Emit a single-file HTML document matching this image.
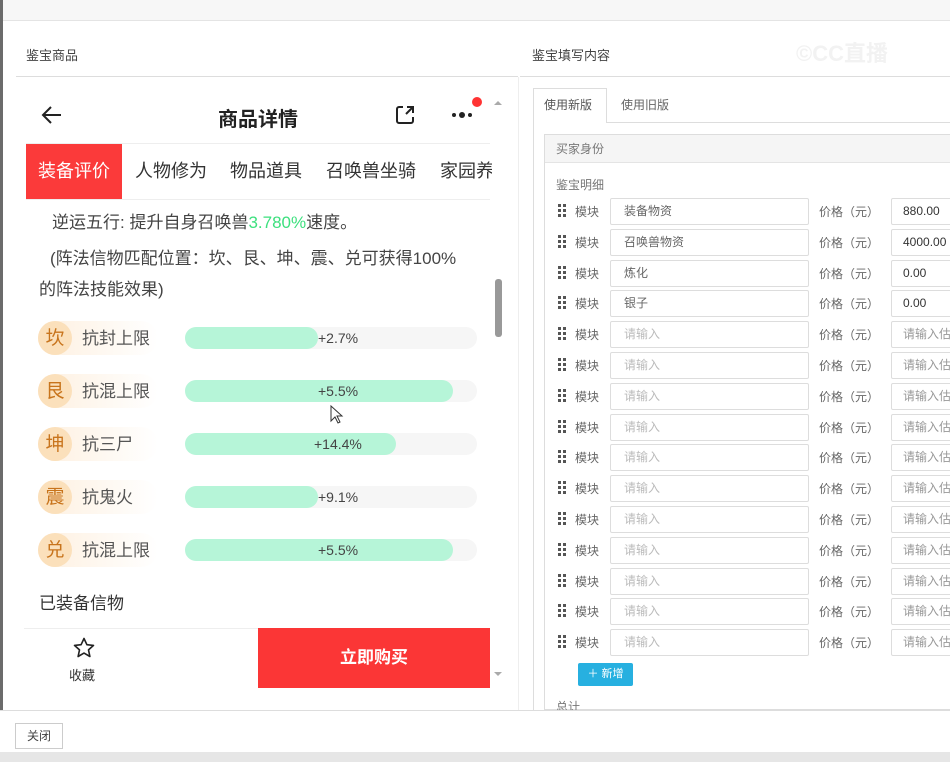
<!DOCTYPE html>
<html><head><meta charset="utf-8"><style>
*{margin:0;padding:0;box-sizing:border-box}
body{width:950px;height:762px;overflow:hidden;background:#fff;font-family:"Liberation Sans","Noto Sans CJK SC",sans-serif;position:relative;color:#333}
.a{position:absolute}
.t{white-space:nowrap}
.c{display:flex;align-items:center;justify-content:center}
</style></head><body>
<div class="a" style="left:0;top:0;width:950px;height:21px;background:#f7f7f7;border-bottom:1px solid #e4e4e4"></div>
<div class="a" style="left:0;top:0;width:3px;height:752px;background:#6b6b6b"></div>
<div class="a t" style="left:26px;top:45px;font-size:13px;color:#444">鉴宝商品</div>
<div class="a" style="left:16px;top:76px;width:502px;height:1px;background:#ddd"></div>
<div class="a t" style="left:532px;top:45px;font-size:13px;color:#444">鉴宝填写内容</div>
<div class="a t" style="left:796px;top:36px;font-size:22px;color:#f2f2f2;font-weight:bold">©CC直播</div>
<div class="a" style="left:520px;top:76px;width:430px;height:1px;background:#ddd"></div>
<div class="a" style="left:518px;top:77px;width:1px;height:633px;background:#eee"></div>

<!-- phone -->
<div class="a" style="left:40px;top:103px;width:24px;height:24px">
<svg width="24" height="24" viewBox="0 0 24 24"><path d="M21 12H3M11 4L3 12l8 8" fill="none" stroke="#222" stroke-width="2"/></svg></div>
<div class="a t" style="left:218px;top:103px;font-size:20px;font-weight:bold;color:#222">商品详情</div>
<div class="a" style="left:394px;top:104px"><svg width="22" height="22" viewBox="0 0 22 22"><path d="M9 3H5a2 2 0 0 0-2 2v12a2 2 0 0 0 2 2h12a2 2 0 0 0 2-2v-4M12 10l7-7M13 3h6v6" fill="none" stroke="#222" stroke-width="2"/></svg></div>
<div class="a" style="left:452px;top:113px;width:4px;height:4px;border-radius:2px;background:#222"></div>
<div class="a" style="left:459px;top:112px;width:6px;height:6px;border-radius:3px;background:#222"></div>
<div class="a" style="left:468px;top:113px;width:4px;height:4px;border-radius:2px;background:#222"></div>
<div class="a" style="left:472px;top:97px;width:10px;height:10px;border-radius:5px;background:#f33"></div>
<div class="a" style="left:494px;top:97px;width:0;height:0;border:4px solid transparent;border-bottom-color:#aaa"></div>
<div class="a" style="left:26px;top:143px;width:464px;height:1px;background:#eee"></div>
<div class="a t" style="left:26px;top:144px;width:96px;height:55px;background:#fb3a3a;color:#fff;font-size:18px;line-height:55px;text-align:center">装备评价</div>
<div class="a t" style="left:135px;top:144px;font-size:18px;line-height:55px;color:#333">人物修为</div>
<div class="a t" style="left:230px;top:144px;font-size:18px;line-height:55px;color:#333">物品道具</div>
<div class="a t" style="left:326px;top:144px;font-size:18px;line-height:55px;color:#333">召唤兽坐骑</div>
<div class="a t" style="left:440px;top:144px;width:52px;overflow:hidden;font-size:18px;line-height:55px;color:#333">家园养</div>
<div class="a" style="left:26px;top:199px;width:464px;height:1px;background:#eee"></div>
<div class="a t" style="left:52px;top:208px;font-size:17px;color:#444">逆运五行: 提升自身召唤兽<span style="color:#3de07e">3.780%</span>速度。</div>
<div class="a t" style="left:50px;top:244px;font-size:17px;color:#444">(阵法信物匹配位置：坎、艮、坤、震、兑可获得100%</div>
<div class="a t" style="left:39px;top:275px;font-size:17px;color:#444">的阵法技能效果)</div>
<div class="a" style="left:495px;top:279px;width:7px;height:58px;border-radius:3px;background:#999"></div>

<div id="bars"></div>

<div class="a t" style="left:39px;top:589px;font-size:17px;color:#333">已装备信物</div>
<div class="a" style="left:24px;top:628px;width:234px;height:1px;background:#eee"></div>
<div class="a" style="left:72px;top:636px"><svg width="24" height="24" viewBox="0 0 24 24"><path d="M12 2.5l2.9 6.2 6.6.7-5 4.5 1.4 6.6L12 17.1l-5.9 3.4 1.4-6.6-5-4.5 6.6-.7z" fill="none" stroke="#222" stroke-width="1.6" stroke-linejoin="round"/></svg></div>
<div class="a t" style="left:69px;top:665px;font-size:13px;color:#333">收藏</div>
<div class="a t" style="left:258px;top:628px;width:232px;height:60px;background:#fb3636;color:#fff;font-size:17px;font-weight:bold;line-height:60px;text-align:center">立即购买</div>
<div class="a" style="left:494px;top:672px;border:4px solid transparent;border-top-color:#aaa"></div>

<!-- right -->
<div class="a" style="left:533px;top:122px;width:417px;height:1px;background:#ddd"></div>
<div class="a" style="left:533px;top:88px;width:74px;height:35px;background:#fff;border:1px solid #ddd;border-bottom:none"></div>
<div class="a t" style="left:544px;top:96px;font-size:12px;color:#555">使用新版</div>
<div class="a t" style="left:621px;top:96px;font-size:12px;color:#666">使用旧版</div>
<div class="a" style="left:533px;top:123px;width:1px;height:587px;background:#ddd"></div>
<div class="a" style="left:544px;top:134px;width:406px;height:576px;border:1px solid #ddd;border-right:none"></div>
<div class="a" style="left:545px;top:135px;width:405px;height:28px;background:#f5f5f5;border-bottom:1px solid #e4e4e4"></div>
<div class="a t" style="left:556px;top:140px;font-size:12px;color:#777">买家身份</div>
<div class="a t" style="left:556px;top:176px;font-size:12px;color:#777">鉴宝明细</div>
<div id="rows"></div>
<div class="a t" style="left:578px;top:663px;width:55px;height:23px;background:#27b0e0;border-radius:2px;color:#fff;font-size:11px;line-height:23px;text-align:center">＋ 新增</div>
<div class="a t" style="left:556px;top:698px;font-size:12px;color:#777">总计</div>

<div class="a" style="left:0;top:710px;width:950px;height:42px;background:#fff;border-top:1px solid #ddd"></div>
<div class="a t" style="left:15px;top:723px;width:48px;height:26px;border:1px solid #ccc;font-size:12px;line-height:24px;text-align:center;color:#444;background:#fff">关闭</div>
<div class="a" style="left:0;top:752px;width:950px;height:10px;background:#e6e6e6"></div>
<div class="a" style="left:330px;top:405px"><svg width="14" height="20" viewBox="0 0 14 20"><path d="M1 1v15l4-4 3 6 2-1-3-6h5z" fill="#fff" stroke="#333" stroke-width="1"/></svg></div>

<script>
var b=[["坎","抗封上限",133,"+2.7%",280],["艮","抗混上限",268,"+5.5%",280],["坤","抗三尸",211,"+14.4%",276],["震","抗鬼火",133,"+9.1%",280],["兑","抗混上限",268,"+5.5%",280]],bh="";
for(var k=0;k<5;k++){var t=321+k*53,e=b[k];
bh+='<div class="a" style="left:38px;top:'+t+'px">'+
'<div class="a" style="left:0;top:0;width:120px;height:34px;border-radius:17px;background:linear-gradient(90deg,#fdf0e0,#fff)"></div>'+
'<div class="a c t" style="left:0;top:0;width:34px;height:34px;border-radius:17px;background:#fbe0bb;color:#c8741c;font-size:19px;line-height:1">'+e[0]+'</div>'+
'<div class="a c t" style="left:44px;top:0;height:34px;font-size:17px;color:#555;line-height:1">'+e[1]+'</div>'+
'<div class="a" style="left:147px;top:6px;width:292px;height:22px;border-radius:11px;background:#f6f6f6"></div>'+
'<div class="a" style="left:147px;top:6px;width:'+e[2]+'px;height:22px;border-radius:11px;background:#b6f5d8"></div>'+
'<div class="a c t" style="left:'+e[4]+'px;top:6px;height:22px;font-size:14px;color:#444;line-height:1">'+e[3]+'</div></div>';}
document.getElementById('bars').innerHTML=bh;
var v=[["装备物资","880.00"],["召唤兽物资","4000.00"],["炼化","0.00"],["银子","0.00"]],h="";
for(var i=0;i<15;i++){var y=Math.round(198+i*30.8);var a=v[i];
var dots="";for(var r=0;r<3;r++)for(var c=0;c<2;c++)dots+='<div class="a" style="left:'+(558+c*5)+'px;top:'+(y+6+r*5)+'px;width:3px;height:3px;background:#555"></div>';
h+=dots+'<div class="a t" style="left:575px;top:'+(y+5)+'px;font-size:12px;color:#666">模块</div>'+
'<div class="a t" style="left:610px;top:'+y+'px;width:199px;height:27px;border:1px solid #ddd;border-radius:2px;font-size:12px;line-height:25px;padding-left:13px;color:'+(a?'#666':'#bbb')+'">'+(a?a[0]:'请输入')+'</div>'+
'<div class="a t" style="left:819px;top:'+(y+5)+'px;font-size:12px;color:#666">价格（元）</div>'+
'<div class="a t" style="left:891px;top:'+y+'px;width:70px;height:27px;border:1px solid #ddd;border-radius:2px;font-size:12px;line-height:25px;padding-left:11px;overflow:hidden;color:'+(a?'#333':'#999')+'">'+(a?a[1]:'请输入估')+'</div>';}
document.getElementById('rows').innerHTML=h;
</script>
</body></html>
